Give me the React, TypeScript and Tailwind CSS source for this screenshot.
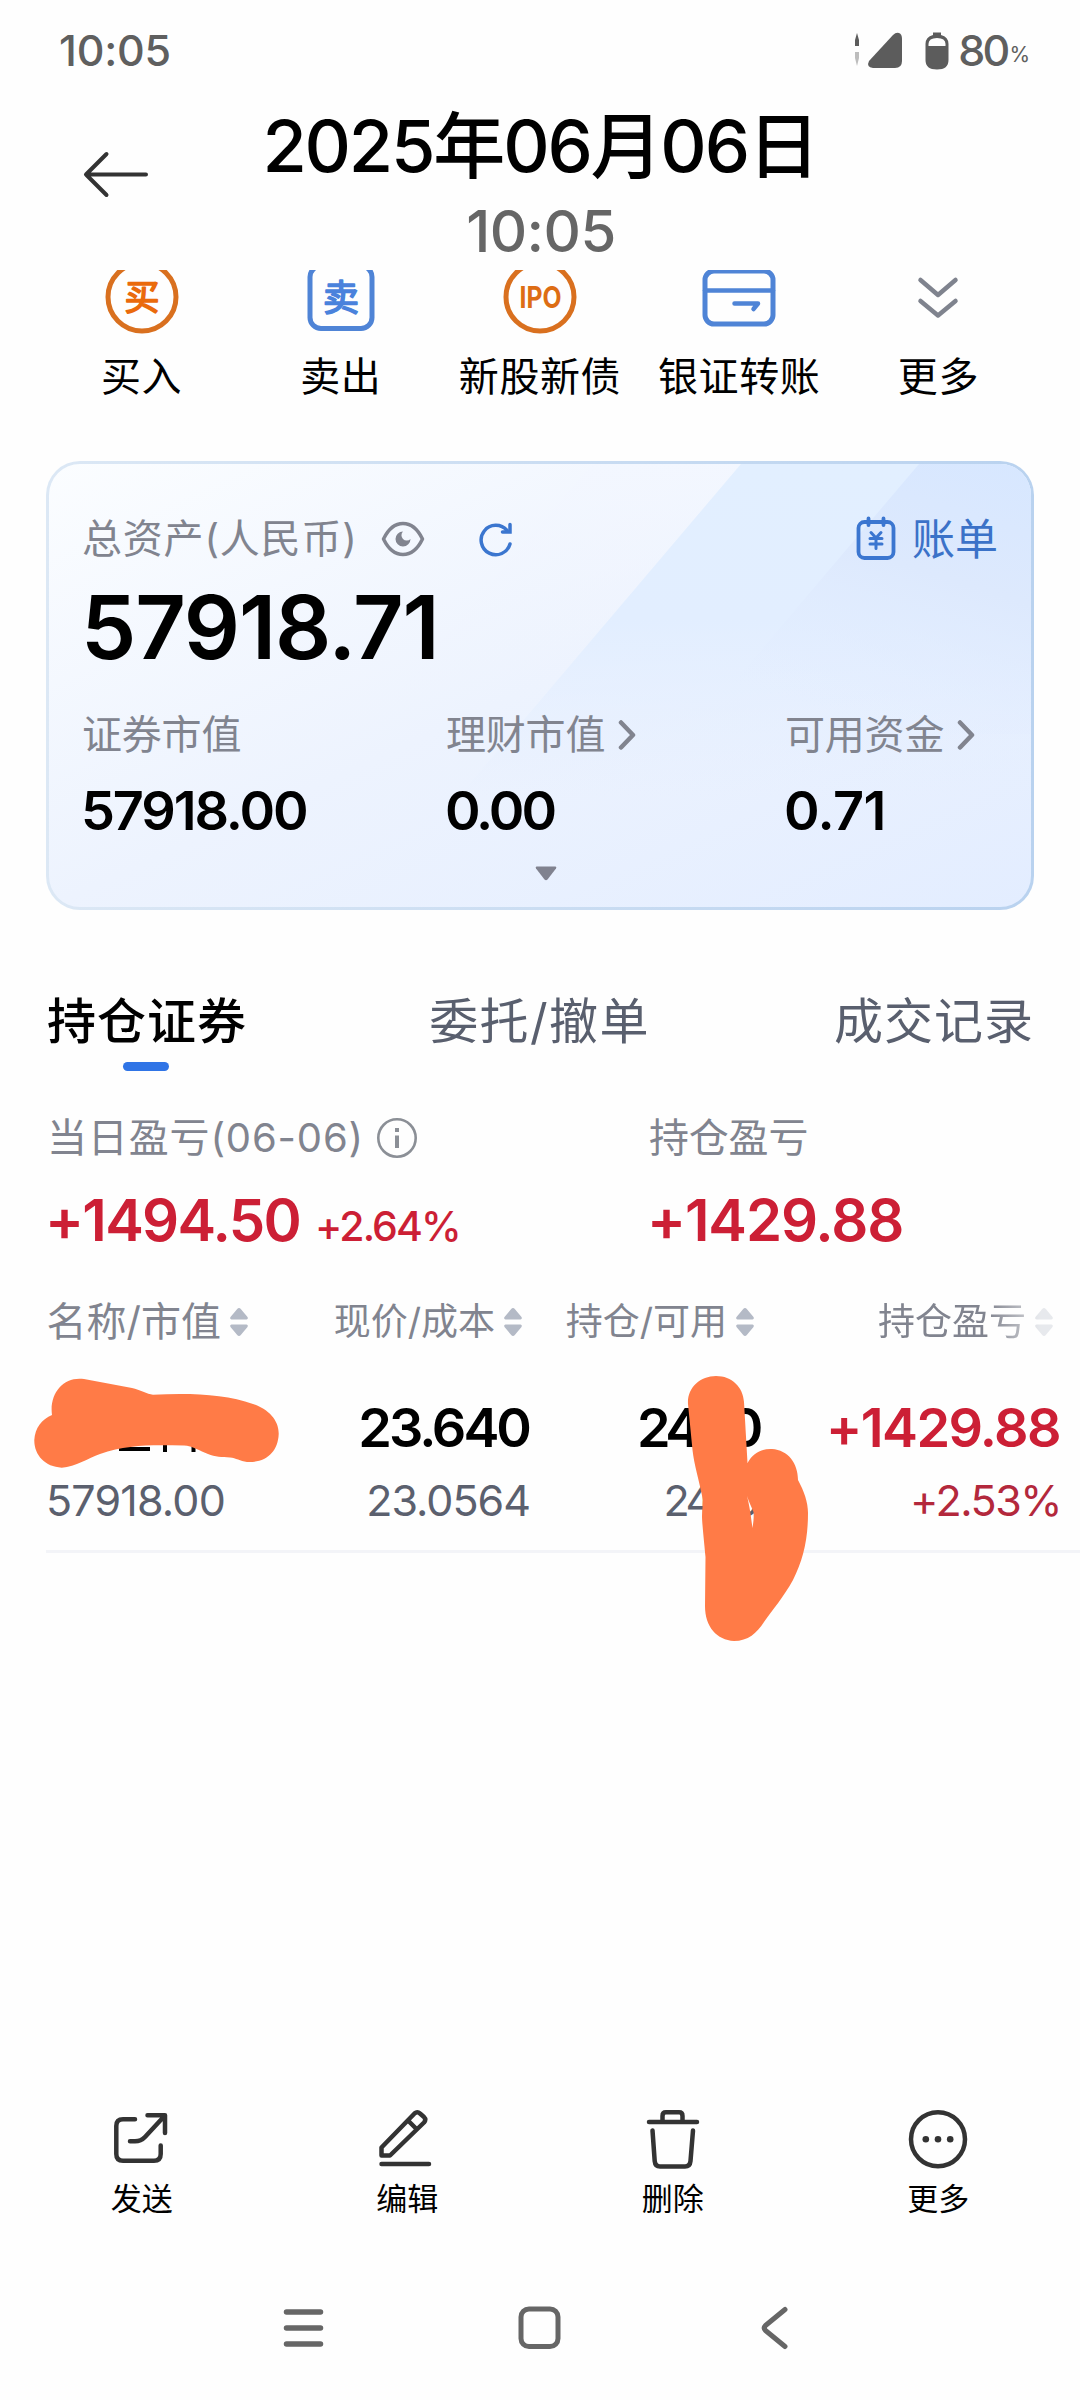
import { ReactNode } from "react"

type LabelProps = {
    children: ReactNode
    className?: string
}

type ActionProps = {
    label: string
    children: ReactNode
}

type ColumnTitleProps = {
    label: string
    className?: string
}

const StatusBar = () => {
    return (
        <div className="h-[101px] shrink-0 flex items-center justify-between pl-[59px] pr-[51px] text-[#5f5f5f]">
            <span className="text-[43px] leading-none font-medium tracking-[-0.2px]">10:05</span>
            <div className="flex items-center">
                <svg width="50" height="40" viewBox="0 0 50 40" fill="#5c5c5c">
                    <path d="M4 2 L6 9 V15 H2 V9 Z" />
                    <path d="M2 21 H6 V27 L4 35 L2 27 Z" fill="#bdbdbd" />
                    <path d="M40 4 Q43 1 46 2 Q49 3 49 8 V30 Q49 37 42 37 H20 Q13 36 16 30 Z" />
                </svg>
                <svg width="24" height="40" viewBox="0 0 24 40" className="ml-[22px]">
                    <path d="M8 1.5 H16 V4 Q23.500 6 23.500 13 V29 Q23.500 38.500 12 38.500 Q0.500 38.500 0.500 29 V13 Q0.500 6 8 4 Z" fill="#5c5c5c" />
                    <path d="M3.500 15 V13 Q3.500 7 12 7 Q20.500 7 20.500 13 V15 Z" fill="#fefefe" />
                </svg>
                <span className="ml-[9px] text-[43px] leading-none font-medium tracking-[-2.9px]">80</span>
                <span className="ml-[2px] mt-2 text-[21px] leading-none tracking-[-1px]">%</span>
            </div>
        </div>
    )
}

const Header = () => {
    return (
        <header className="h-[169px] shrink-0 grid grid-cols-[200px_1fr_200px]">
            <svg width="66" height="48" viewBox="0 0 66 48" className="ml-[83px] mt-[49px]" fill="none" stroke="#333" strokeWidth="4" strokeLinecap="round" strokeLinejoin="round">
                <path d="M23.500 4 L3 24.500 L23.500 45 M3 24.500 H63" />
            </svg>
            <div className="flex flex-col items-center">
                <h1 className="mt-[9px] text-[72px] leading-[72px] font-medium text-black whitespace-nowrap tracking-[-2.2px]">2025年06月06日</h1>
                <p className="mt-[20px] ml-[2px] text-[58px] leading-[58px] font-medium text-[#666] tracking-[-0.6px]">10:05</p>
            </div>
        </header>
    )
}

const QuickAction = ({ label, children }: ActionProps) => {
    return (
        <div className="flex flex-col items-center">
            <svg width="80" height="66" viewBox="0 0 80 66" fill="none" strokeLinecap="round" strokeLinejoin="round">
                {children}
            </svg>
            <span className="mt-[21px] text-[40px] leading-[40px] text-black whitespace-nowrap tracking-[0.6px]">{label}</span>
        </div>
    )
}

const QuickActions = () => {
    return (
        <section className="shrink-0 h-[191px] px-[42px] grid grid-cols-5">
            <QuickAction label="买入">
                <circle cx="40" cy="27" r="34" stroke="#d9701f" strokeWidth="5" />
                <text x="40" y="40" fontSize="35" fontWeight="400" textAnchor="middle" fill="#ea6a0c" stroke="#ea6a0c" strokeWidth="1.600">买</text>
            </QuickAction>
            <QuickAction label="卖出">
                <rect x="9" y="-4" width="62" height="62.500" rx="11" stroke="#4f84d6" strokeWidth="5" />
                <text x="40" y="41" fontSize="36" fontWeight="400" textAnchor="middle" fill="#4a82dc" stroke="#4a82dc" strokeWidth="1.600">卖</text>
            </QuickAction>
            <QuickAction label="新股新债">
                <circle cx="40" cy="27" r="34" stroke="#d9701f" strokeWidth="5" />
                <text x="40.500" y="38" fontSize="30" fontWeight="700" textAnchor="middle" textLength="42" lengthAdjust="spacingAndGlyphs" fill="#dd6d14">IPO</text>
            </QuickAction>
            <QuickAction label="银证转账">
                <rect x="6" y="1" width="68" height="53" rx="9" stroke="#4f84d6" strokeWidth="5" />
                <path d="M6 20.500 H74" stroke="#4f84d6" strokeWidth="4.500" />
                <path d="M35.500 33.500 H59 L54.500 39" stroke="#4f84d6" strokeWidth="4.500" />
            </QuickAction>
            <QuickAction label="更多">
                <path d="M22.500 10 L40 25 L57.500 10 M22.500 31 L40 45.500 L57.500 31" stroke="#7f838e" strokeWidth="4.500" />
            </QuickAction>
        </section>
    )
}

const Muted = ({ children, className = "" }: LabelProps) => {
    return <span className={`text-[40px] leading-[40px] text-[#81848f] whitespace-nowrap ${className}`}>{children}</span>
}

const Chevron = () => {
    return (
        <svg width="18" height="32" viewBox="0 0 18 32" className="ml-[13px]" fill="none" stroke="#81848f" strokeWidth="4.500" strokeLinecap="round" strokeLinejoin="round">
            <path d="M3 3.500 L15 16 L3 28.500" />
        </svg>
    )
}

const AssetCard = () => {
    return (
        <section className="relative shrink-0 mx-[46px] w-[988px] h-[449px] rounded-[34px] p-[3px] overflow-hidden bg-linear-to-r from-[#dce8f5] to-[#b9d2ef]">
            <div className="relative h-full rounded-[31px] overflow-hidden bg-linear-to-br from-[#fbfdff] via-[#edf3fe] to-[#e3edff]">
                <svg className="absolute inset-0" width="982" height="443" viewBox="0 0 982 443">
                    <defs>
                        <linearGradient id="wide" x1="0" y1="0" x2="0" y2="1">
                            <stop offset="0" stopColor="#e2efff" />
                            <stop offset="0.350" stopColor="#e2eeff" />
                            <stop offset="0.750" stopColor="#e4eeff" stopOpacity="0" />
                        </linearGradient>
                        <linearGradient id="corner" x1="1" y1="0" x2="0.600" y2="1">
                            <stop offset="0" stopColor="#d7e7ff" />
                            <stop offset="0.450" stopColor="#dde9fd" />
                            <stop offset="1" stopColor="#e3edff" stopOpacity="0" />
                        </linearGradient>
                        <linearGradient id="shine" x1="0" y1="0" x2="0" y2="1">
                            <stop offset="0" stopColor="#f3f7ff" stopOpacity="0.900" />
                            <stop offset="1" stopColor="#eef3fe" stopOpacity="0" />
                        </linearGradient>
                    </defs>
                    <path d="M543 0 H692 L480 250 H330 Z" fill="url(#shine)" />
                    <path d="M692 0 H982 V443 H316 Z" fill="url(#wide)" />
                    <path d="M870 0 H982 V270 H641 Z" fill="url(#corner)" />
                </svg>
                <div className="relative pl-[33px] pr-[33px] flex flex-col">
                    <div className="mt-[53px] h-[44px] flex items-center">
                        <Muted className="w-[299px] tracking-[0.8px]">总资产(人民币)</Muted>
                        <svg width="44" height="36" viewBox="0 0 44 36" fill="none" stroke="#81848f" strokeWidth="3.500">
                            <path d="M2.500 18 Q10 2.500 22 2.500 Q34 2.500 41.500 18 Q34 33.500 22 33.500 Q10 33.500 2.500 18 Z" strokeLinejoin="round" />
                            <path d="M22 10.500 A7.500 7.500 0 1 0 29.500 18 A5 5 0 0 1 22 10.500 Z" fill="#81848f" stroke="none" />
                        </svg>
                        <svg width="36" height="36" viewBox="0 0 36 36" className="ml-[52px]" fill="none" stroke="#3b76cf" strokeWidth="3.500" strokeLinecap="round">
                            <path d="M33 23 A14.700 14.700 0 1 1 30 9.500" />
                            <path d="M33 3.500 V11 H25.500" />
                        </svg>
                        <div className="ml-auto flex items-center text-[#3b72c8]">
                            <svg width="40" height="46" viewBox="0 0 40 46" fill="none" stroke="#3b76d0" strokeWidth="3.800" strokeLinecap="round" strokeLinejoin="round">
                                <rect x="2.500" y="6" width="35" height="36" rx="6" />
                                <path d="M12.500 2.500 V9 M27.500 2.500 V9" />
                                <path d="M15 16.500 L20 22 L25 16.500 M14 22.500 H26 M14 28 H26 M20 22 V32.500" strokeWidth="3" />
                            </svg>
                            <span className="ml-[16px] text-[43px] leading-[44px]">账单</span>
                        </div>
                    </div>
                    <p className="mt-[22px] -ml-[1px] text-[88px] leading-[88px] font-semibold text-black tracking-[-1.2px]">57918.71</p>
                    <div className="mt-[36px] grid grid-cols-[364px_339px_1fr]">
                        <div>
                            <div className="h-[55px] flex items-center"><Muted className="tracking-[-0.200px]">证券市值</Muted></div>
                            <p className="mt-[22px] -ml-[1px] text-[54px] leading-[54px] font-semibold tracking-[-2.1px]">57918.00</p>
                        </div>
                        <div>
                            <div className="h-[55px] flex items-center"><Muted className="tracking-[-0.200px]">理财市值</Muted><Chevron /></div>
                            <p className="mt-[22px] -ml-[1px] text-[54px] leading-[54px] font-semibold tracking-[-3px]">0.00</p>
                        </div>
                        <div>
                            <div className="h-[55px] flex items-center"><Muted className="tracking-[-0.200px]">可用资金</Muted><Chevron /></div>
                            <p className="mt-[22px] -ml-[1px] text-[54px] leading-[54px] font-semibold tracking-[-0.6px]">0.71</p>
                        </div>
                    </div>
                    <svg width="22" height="15" viewBox="0 0 22 15" className="mt-[28px] ml-[453px]" fill="#80828f">
                        <path d="M1.500 0.500 H20.500 Q22 1 21 2.500 L12.500 13.500 Q11 15 9.500 13.500 L1 2.500 Q0 1 1.500 0.500 Z" />
                    </svg>
                </div>
            </div>
        </section>
    )
}

const Tabs = () => {
    return (
        <nav className="shrink-0 mt-[82px] pl-[47px] pr-[46px] h-[79px] flex justify-between text-[49px] leading-[60px] tracking-[1px] text-[#595f6e]">
            <div className="flex flex-col w-[198px]">
                <span className="text-black font-medium whitespace-nowrap">持仓证券</span>
                <span className="mt-[10px] ml-[76px] w-[46px] h-[9px] rounded-full bg-[#2f74e6]" />
            </div>
            <span className="tracking-[1.4px]">委托/撤单</span>
            <span>成交记录</span>
        </nav>
    )
}

const Summary = () => {
    return (
        <section className="shrink-0 mt-[39px] pl-[48px] grid grid-cols-[601px_1fr] text-[#cc1f35]">
            <div>
                <div className="h-[56px] flex items-center">
                    <Muted className="-ml-[1px] tracking-[0.85px]">当日盈亏(06-06)</Muted>
                    <svg width="42" height="42" viewBox="0 0 42 42" className="ml-[12px]">
                        <circle cx="21" cy="21" r="18.700" fill="none" stroke="#8b8f96" strokeWidth="2.600" />
                        <path d="M19 11 H23 V15 H19 Z M19 18.500 H23 V31 H19 Z" fill="#8b8f96" />
                    </svg>
                </div>
                <div className="mt-[24px] -ml-[3px] h-[60px] flex items-baseline">
                    <span className="text-[58px] leading-[60px] font-semibold tracking-[-1.7px]">+1494.50</span>
                    <span className="ml-[15px] text-[41px] leading-[48px] font-medium tracking-[-1.9px]">+2.64%</span>
                </div>
            </div>
            <div>
                <div className="h-[56px] flex items-center"><Muted className="tracking-[-0.200px]">持仓盈亏</Muted></div>
                <div className="mt-[24px] -ml-[2px] text-[58px] leading-[60px] font-semibold tracking-[-1.1px]">+1429.88</div>
            </div>
        </section>
    )
}

const ColumnTitle = ({ label, className = "" }: ColumnTitleProps) => {
    return (
        <div className={`flex items-center justify-end leading-[44px] whitespace-nowrap text-[#81848f] ${className}`}>
            <span>{label}</span>
            <svg width="18" height="28" viewBox="0 0 18 28" className="ml-[9px]" fill="#b4bac6">
                <path d="M9 0 Q10 0 11 1.200 L17.500 9 Q18.500 11 16.500 11.500 H1.500 Q-0.500 11 0.500 9 L7 1.200 Q8 0 9 0 Z" />
                <path d="M9 28 Q10 28 11 26.800 L17.500 19 Q18.500 17 16.500 16.500 H1.500 Q-0.500 17 0.500 19 L7 26.800 Q8 28 9 28 Z" />
            </svg>
        </div>
    )
}

const Holdings = () => {
    return (
        <section className="relative shrink-0 mt-[50px] h-[253px]">
            <div className="grid grid-cols-[248px_274px_232px_299px] h-[44px]">
                <ColumnTitle label="名称/市值" className="text-[40px]" />
                <ColumnTitle label="现价/成本" className="text-[37px]" />
                <ColumnTitle label="持仓/可用" className="text-[37px]" />
                <ColumnTitle label="持仓盈亏" className="text-[37px] [mask-image:linear-gradient(90deg,#000_78%,rgba(0,0,0,0.3)_96%)]" />
            </div>
            <div className="mt-[57px] grid grid-cols-[249px_280px_230px_301px] text-right text-[54px] leading-[54px] font-semibold">
                <span />
                <span className="tracking-[-3px]">23.640</span>
                <span className="tracking-[-4.500px]">2400</span>
                <span className="tracking-[-1.6px] text-[#cc1f35]">+1429.88</span>
            </div>
            <div className="mt-[23px] grid grid-cols-[249px_281px_227px_304px] text-right text-[43px] leading-[44px] tracking-[-1px] text-[#5b606e]">
                <span className="text-left pl-[46px] tracking-[-0.8px]">57918.00</span>
                <span>23.0564</span>
                <span className="tracking-[-3.500px]">2400</span>
                <span className="tracking-[-1.500px] text-[#b3283c]">+2.53%</span>
            </div>
            <div className="mt-[28px] ml-[46px] h-[3px] bg-[#f3f4f8]" />

            {/* marker strokes over the stock name and the share count */}
            <svg className="absolute left-0 top-0" width="1080" height="350" viewBox="0 1300 1080 350" fill="#ff7b47">
                <path d="M119 1449 H150 M165 1440 V1452 M193.500 1440 V1452" stroke="#000" strokeWidth="4" />
                <path d="M52 1415 C49 1393 64 1376 84 1379 L132 1388 C140 1390 147 1394 153 1394.700 C190 1393 226 1394 253 1404 C268 1409 279 1420 278.700 1434 C278 1452 266 1463 247 1462 C240 1461 236 1458 230 1457.500 C222 1457 215 1457 208 1454 C200 1451 192 1446 184 1445.600 C155 1445 128 1444 100 1454 C88 1458 76 1467 61.700 1467.700 C45 1467 34 1455 34.300 1440 C35 1428 42 1419 52 1415 Z" />
                <path d="M716 1376 C732 1376 743 1387 744 1402 L747.500 1463 C753 1453 762 1448.500 772 1449 C788 1450 798 1463 798 1480 C804 1491 808 1502 808 1513 C808 1540 803 1560 793 1580 C783 1598 773 1609 764 1622 C757 1633 748 1641 734 1641 C717 1640 705 1627 705 1606 L705.500 1557 C704 1540 702 1523 702 1516 L703 1500 C699 1480 694 1464 692.500 1450 L688 1404 C687 1388 700 1376 716 1376 Z M747 1496 C750 1508 751 1517 752.500 1528 C753.500 1521 754 1517 753.500 1512 C751 1506 749 1502 747 1496 Z" fillRule="evenodd" />
            </svg>
        </section>
    )
}

const ToolButton = ({ label, children }: ActionProps) => {
    return (
        <button className="flex flex-col items-center">
            <svg width="64" height="64" viewBox="0 0 64 64" fill="none" stroke="#333" strokeWidth="4.500" strokeLinecap="round" strokeLinejoin="round">
                {children}
            </svg>
            <span className="mt-[12px] text-[31px] leading-[30px] text-black">{label}</span>
        </button>
    )
}

const Toolbar = () => {
    return (
        <footer className="shrink-0 mt-[555px] px-[9px] grid grid-cols-4">
            <ToolButton label="发送">
                <path d="M25 11.300 H13 Q6.300 11.300 6.300 18 V46 Q6.300 52.700 13 52.700 H44 Q50.700 52.700 50.700 46 V37.500" />
                <path d="M37.500 7.300 H55 V25 M20 33.300 H25 Q31 33.300 35 29 L54 8.500" />
            </ToolButton>
            <ToolButton label="编辑">
                <path d="M6.500 47.500 V39.500 L39.500 5.500 Q42.300 3 45 5.500 L49 9 Q51.500 11.500 49 14.500 L15 47.500 Z" />
                <path d="M33.500 13 L41 20.500 M6.500 56 H54" />
            </ToolButton>
            <ToolButton label="删除">
                <path d="M8 14 H56 M21.500 13 V8 Q21.500 4.300 25 4.300 H38 Q41.500 4.300 41.500 8 V13" />
                <path d="M11.500 22.500 L13.700 53 Q14.200 58.500 19 58.500 H44 Q49 58.500 49.500 53 L52 22.500" />
            </ToolButton>
            <ToolButton label="更多">
                <circle cx="32" cy="31.300" r="27" />
                <circle cx="19.800" cy="31.300" r="3.300" fill="#333" stroke="none" />
                <circle cx="32" cy="31.300" r="3.300" fill="#333" stroke="none" />
                <circle cx="44.200" cy="31.300" r="3.300" fill="#333" stroke="none" />
            </ToolButton>
        </footer>
    )
}

const SystemNav = () => {
    return (
        <div className="shrink-0 mt-[92px] ml-[187px] w-[705px] grid grid-cols-3 justify-items-center">
            <svg width="48" height="48" viewBox="0 0 48 48" fill="none" stroke="#666" strokeWidth="5.500" strokeLinecap="round">
                <path d="M5.500 6 H39.500 M5.500 22 H39.500 M5.500 38 H39.500" />
            </svg>
            <svg width="48" height="48" viewBox="0 0 48 48" fill="none" stroke="#666" strokeWidth="5">
                <rect x="5" y="3" width="37" height="37.500" rx="8" />
            </svg>
            <svg width="48" height="48" viewBox="0 0 48 48" fill="none" stroke="#666" strokeWidth="5" strokeLinecap="round" strokeLinejoin="round">
                <path d="M34 3.500 L14.500 19.500 Q12 22 14.500 24.500 L34 40.500" />
            </svg>
        </div>
    )
}

export default function App() {
    return (
        <main className="w-[1080px] h-[2400px] flex flex-col overflow-hidden bg-[#fefefe] text-black font-['Inter','Noto_Sans_CJK_SC',sans-serif]">
            <StatusBar />
            <Header />
            <QuickActions />
            <AssetCard />
            <Tabs />
            <Summary />
            <Holdings />
            <Toolbar />
            <SystemNav />
        </main>
    )
}
